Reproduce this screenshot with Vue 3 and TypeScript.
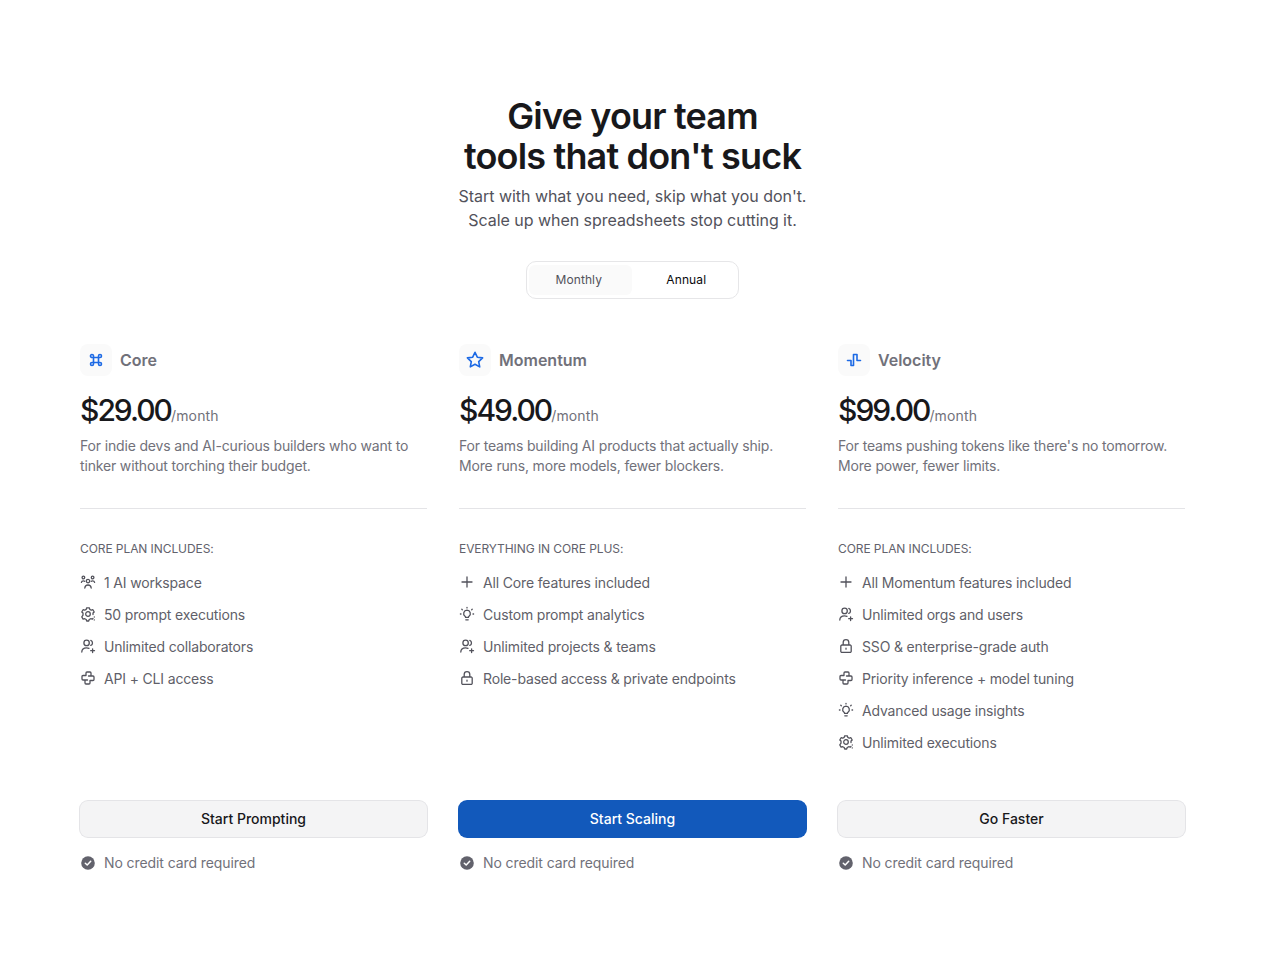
<template>
  <main class="page">
    <header class="intro">
      <h1 class="title">Give your team<br />tools that don't suck</h1>
      <p class="subtitle">Start with what you need, skip what you don't.<br />Scale up when spreadsheets stop cutting it.</p>
      <div class="toggle">
        <button
          v-for="option in billingOptions"
          :key="option"
          class="toggle-btn"
          :class="option === 'Monthly' ? 'is-muted' : 'is-active'"
          @click="billing = option"
        >
          {{ option }}
        </button>
      </div>
    </header>

    <section class="plans">
      <article v-for="plan in plans" :key="plan.name" class="plan">
        <div class="plan-head">
          <span class="plan-icon">
            <svg width="20" height="20" viewBox="0 0 20 20" fill="none" stroke="#1d6ae5" stroke-linecap="round" stroke-linejoin="round" :stroke-width="plan.iconWidth">
              <path :d="plan.icon" />
            </svg>
          </span>
          <h2 class="plan-name">{{ plan.name }}</h2>
        </div>
        <p class="price"><span class="amount">{{ plan.price }}</span><span class="period">/month</span></p>
        <p class="desc">{{ plan.desc }}</p>
        <hr class="rule" />
        <h3 class="label">{{ plan.label }}</h3>
        <ul class="features">
          <li v-for="f in plan.features" :key="f.text" class="feature">
            <svg class="feature-icon" width="16" height="16" viewBox="0 0 16 16" fill="none" stroke="#52525b" stroke-width="1.3" stroke-linecap="round" stroke-linejoin="round">
              <path :d="icons[f.icon]" />
            </svg>
            <span>{{ f.text }}</span>
          </li>
        </ul>
        <button class="cta" :class="{ primary: plan.primary }">{{ plan.cta }}</button>
        <p class="note">
          <svg width="16" height="16" viewBox="0 0 16 16">
            <circle cx="8" cy="8" r="6.800" fill="#62626c" />
            <path d="M5.300 8.200 7.200 10l3.500-3.800" fill="none" stroke="#fff" stroke-width="1.500" stroke-linecap="round" stroke-linejoin="round" />
          </svg>
          No credit card required
        </p>
      </article>
    </section>
  </main>
</template>

<script setup lang="ts">
import { ref } from 'vue'

const billingOptions = ['Monthly', 'Annual']
const billing = ref('Annual')

const icons: Record<string, string> = {
  team: 'M3.400 4.800a1.300 1.300 0 1 0 0-2.600 1.300 1.300 0 0 0 0 2.600ZM12.600 4.800a1.300 1.300 0 1 0 0-2.600 1.300 1.300 0 0 0 0 2.600ZM8 8.800a1.700 1.700 0 1 0 0-3.400 1.700 1.700 0 0 0 0 3.400ZM1.400 8.400c.2-1 1-1.600 2-1.600.5 0 1 .2 1.300.5M14.600 8.400c-.2-1-1-1.600-2-1.600-.5 0-1 .2-1.300.5M4.800 14c.2-1.800 1.500-3 3.200-3s3 1.200 3.200 3',
  gear: 'M8 5.700a2.300 2.300 0 1 0 0 4.600 2.300 2.300 0 0 0 0-4.600ZM13 12.400l-.7.8-1.600-.5-1.500.8-.5 1.500H6.700l-.5-1.500-1.500-.8-1.600.5-1.300-2.300L3 9.200V7.100L1.800 6l1.300-2.300 1.600.5 1.500-.8.500-1.600h2.600l.5 1.600 1.500.8 1.600-.5L14.200 6 13 7.100v1.500M14.300 11v.1M14.300 13.800v.1',
  users: 'M6.600 7.600a2.700 2.700 0 1 0 0-5.400 2.700 2.700 0 0 0 0 5.400ZM1.800 14c0-2.700 2.100-4.200 4.800-4.200.9 0 1.700.2 2.400.5M10.800 2.400a2.700 2.700 0 0 1 0 5M12.600 10.800v3.800M10.700 12.700h3.800',
  api: 'M6 5.500V3a1 1 0 0 1 1-1h3a1 1 0 0 1 1 1v3h2a1 1 0 0 1 1 1v2.500a1 1 0 0 1-1 1h-3V13a1 1 0 0 1-1 1H6a1 1 0 0 1-1-1v-3H3a1 1 0 0 1-1-1V6.500a1 1 0 0 1 1-1h3ZM11 6H8.500M5 10h2.500',
  plus: 'M8 3v10M3 8h10',
  bulb: 'M8 4.200a3.400 3.400 0 0 0-2 6.100c.4.300.6.700.6 1.100h2.800c0-.4.200-.8.600-1.100a3.400 3.400 0 0 0-2-6.100ZM6.800 13.800h2.400M8 1.300v.6M2.800 3.200l.5.500M13.200 3.200l-.5.500M1.400 8h.6M14 8h.6',
  lock: 'M4 7h8a1.200 1.200 0 0 1 1.200 1.200v5A1.200 1.200 0 0 1 12 14.400H4a1.200 1.200 0 0 1-1.200-1.200v-5A1.200 1.200 0 0 1 4 7ZM5.200 7V4.500a2.800 2.800 0 0 1 5.600 0V7M8 10.200v1'
}

interface Feature {
  icon: string
  text: string
}

interface Plan {
  name: string
  icon: string
  iconWidth: number
  price: string
  desc: string
  label: string
  features: Feature[]
  cta: string
  primary?: boolean
}

const plans: Plan[] = [
  {
    name: 'Core',
    icon: 'M7.500 7.500h5v5h-5ZM7.500 7.500H6.200a1.500 1.500 0 1 1 1.300-1.500ZM12.500 7.500V6a1.500 1.500 0 1 1 1.500 1.500ZM12.500 12.500H14a1.500 1.500 0 1 1-1.500 1.500ZM7.500 12.500V14A1.500 1.500 0 1 1 6 12.500Z',
    iconWidth: 1.6,
    price: '$29.00',
    desc: 'For indie devs and AI-curious builders who want to tinker without torching their budget.',
    label: 'CORE PLAN INCLUDES:',
    features: [
      { icon: 'team', text: '1 AI workspace' },
      { icon: 'gear', text: '50 prompt executions' },
      { icon: 'users', text: 'Unlimited collaborators' },
      { icon: 'api', text: 'API + CLI access' }
    ],
    cta: 'Start Prompting'
  },
  {
    name: 'Momentum',
    icon: 'M10 2.300l2.300 4.900 5.300.7-3.900 3.700 1 5.300-4.700-2.600-4.700 2.600 1-5.300-3.900-3.700 5.300-.7Z',
    iconWidth: 1.6,
    price: '$49.00',
    desc: 'For teams building AI products that actually ship. More runs, more models, fewer blockers.',
    label: 'EVERYTHING IN CORE PLUS:',
    features: [
      { icon: 'plus', text: 'All Core features included' },
      { icon: 'bulb', text: 'Custom prompt analytics' },
      { icon: 'users', text: 'Unlimited projects & teams' },
      { icon: 'lock', text: 'Role-based access & private endpoints' }
    ],
    cta: 'Start Scaling',
    primary: true
  },
  {
    name: 'Velocity',
    icon: 'M3.500 10.500H7v5h2.500v-11H13v6h3.500',
    iconWidth: 1.6,
    price: '$99.00',
    desc: "For teams pushing tokens like there's no tomorrow. More power, fewer limits.",
    label: 'CORE PLAN INCLUDES:',
    features: [
      { icon: 'plus', text: 'All Momentum features included' },
      { icon: 'users', text: 'Unlimited orgs and users' },
      { icon: 'lock', text: 'SSO & enterprise-grade auth' },
      { icon: 'api', text: 'Priority inference + model tuning' },
      { icon: 'bulb', text: 'Advanced usage insights' },
      { icon: 'gear', text: 'Unlimited executions' }
    ],
    cta: 'Go Faster'
  }
]
</script>

<style>
body {
  background: #fff;
}
</style>

<style scoped>
.page {
  box-sizing: border-box;
  min-height: 969px;
  padding: 96px 80px 0;
  font-family: Inter, "Liberation Sans", sans-serif;
  color: #5f5f69;
}

.intro {
  display: flex;
  flex-direction: column;
  align-items: center;
  text-align: center;
}

.title {
  margin: 0;
  font-size: 36px;
  line-height: 40px;
  font-weight: 600;
  letter-spacing: -0.82px;
  color: #18181b;
}

.subtitle {
  margin: 8px 0 0;
  font-size: 16px;
  line-height: 24px;
  letter-spacing: -0.04px;
  color: #52525b;
}

.toggle {
  display: flex;
  margin-top: 29px;
  padding: 3px 2px;
  width: 213px;
  height: 38px;
  box-sizing: border-box;
  border: 1px solid #e6e6e8;
  border-radius: 10px;
}

.toggle-btn {
  flex: 1;
  border: 0;
  border-radius: 6px;
  background: none;
  font: 400 12px/16px Inter, "Liberation Sans", sans-serif;
  letter-spacing: 0.1px;
}

.toggle-btn.is-muted {
  padding: 0 3px 0 0;
  background: #fafafa;
  color: #52525b;
}

.toggle-btn.is-active {
  padding: 0 0 0 5px;
  color: #09090b;
}

.plans {
  display: grid;
  grid-template-columns: repeat(3, 1fr);
  gap: 32px;
  margin-top: 45px;
}

.plan {
  display: flex;
  flex-direction: column;
}

.plan-head {
  display: flex;
  align-items: center;
  gap: 8px;
}

.plan-icon {
  display: flex;
  align-items: center;
  justify-content: center;
  width: 32px;
  height: 32px;
  border-radius: 8px;
  background: #fafafa;
}

.plan-name {
  margin: 0;
  font-size: 16px;
  line-height: 24px;
  font-weight: 600;
  color: #71717a;
}

.price {
  display: flex;
  align-items: baseline;
  margin: 16px 0 0;
  height: 36px;
}

.amount {
  font-size: 30px;
  line-height: 36px;
  font-weight: 500;
  letter-spacing: -2px;
  color: #18181b;
}

.period {
  font-size: 14px;
  letter-spacing: 0.15px;
  color: #71717a;
}

.desc {
  margin: 8px 0 0;
  height: 40px;
  font-size: 14px;
  line-height: 20px;
  letter-spacing: -0.16px;
  color: #71717a;
}

.rule {
  width: 100%;
  margin: 32px 0;
  border: 0;
  border-top: 1px solid #e4e4e7;
}

.label {
  margin: 0;
  font-size: 12px;
  line-height: 16px;
  font-weight: 400;
  letter-spacing: -0.08px;
  color: #62626c;
}

.features {
  flex: 1;
  margin: 9px 0 0;
  padding: 0;
  list-style: none;
}

.feature {
  display: flex;
  align-items: center;
  gap: 8px;
  height: 32px;
  font-size: 14px;
  letter-spacing: -0.16px;
  color: #5f5f69;
}

.feature-icon {
  flex: none;
}

.cta {
  width: 100%;
  height: 36px;
  margin-top: 43px;
  border: 0;
  border-radius: 8px;
  background: #f4f4f5;
  box-shadow: 0 0 0 1px #e4e4e7;
  font: 500 14px/20px Inter, "Liberation Sans", sans-serif;
  color: #18181b;
}

.cta.primary {
  background: #1259bb;
  box-shadow: 0 0 0 1px #1259bb;
  color: #fff;
}

.note {
  display: flex;
  align-items: center;
  gap: 8px;
  margin: 16px 0 0;
  font-size: 14px;
  line-height: 20px;
  letter-spacing: -0.09px;
  color: #71717a;
}
</style>
